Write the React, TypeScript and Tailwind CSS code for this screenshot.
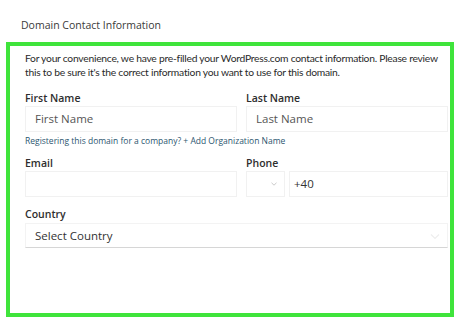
export default function App() {
  return (
    <div className="h-[320px] w-[460px] bg-white font-['Open_Sans',sans-serif] text-[#2e2e2e]">
      <div className="pl-[21px] pt-[17px] text-[10.5px] leading-[16px] text-[#3a3a3a]">
        Domain Contact Information
      </div>
      <div className="mx-[6px] mt-[9px] h-[275px] border-[4px] border-[#3fe43b] px-[15px] pt-[5px]">
        <p className="whitespace-nowrap font-['Lato',sans-serif] text-[10.3px] leading-[14px] tracking-[-0.25px] text-[#2a2a2a]">
          For your convenience, we have pre-filled your WordPress.com contact information. Please review
          <br />
          this to be sure it's the correct information you want to use for this domain.
        </p>
        <div className="mt-[12px] grid grid-cols-[212px_202px] gap-x-[9px]">
          <div>
            <div className="text-[10.5px] font-semibold leading-[14px]">First Name</div>
            <div className="mt-[1px] flex h-[26px] items-center border border-[#f1f1f1] px-[9px] text-[11.5px] text-[#555]">
              First Name
            </div>
          </div>
          <div>
            <div className="text-[10.5px] font-semibold leading-[14px]">Last Name</div>
            <div className="mt-[1px] flex h-[26px] items-center border border-[#f1f1f1] px-[9px] text-[11.5px] text-[#555]">
              Last Name
            </div>
          </div>
        </div>
        <div className="mt-[3px] text-[8.5px] leading-[12px] text-[#2c5670]">
          Registering this domain for a company? + Add Organization Name
        </div>
        <div className="mt-[9px] grid grid-cols-[212px_202px] gap-x-[9px]">
          <div>
            <div className="text-[10.5px] font-semibold leading-[14px]">Email</div>
            <div className="mt-[1px] h-[26px] border border-[#f1f1f1]"></div>
          </div>
          <div>
            <div className="text-[10.5px] font-semibold leading-[14px]">Phone</div>
            <div className="mt-[1px] flex h-[26px]">
              <div className="flex w-[39px] items-center justify-end border border-[#f1f1f1] pr-[7px]">
                <svg width="6" height="4" viewBox="0 0 6 4" fill="none" stroke="#bbb" strokeWidth="0.8">
                  <path d="M0.5 0.8 3 3.2 5.5 0.8" />
                </svg>
              </div>
              <div className="ml-[4px] flex flex-1 items-center border border-[#f1f1f1] px-[4px] text-[11.5px] text-[#333]">
                +40
              </div>
            </div>
          </div>
        </div>
        <div className="mt-[10px]">
          <div className="text-[10.5px] font-semibold leading-[14px]">Country</div>
          <div className="mt-[2px] flex h-[25px] w-[423px] items-center justify-between border border-[#f3f3f3] border-b-[#d6d6d6] pl-[9px] pr-[6px] text-[11.5px] text-[#333]">
            <span>Select Country</span>
            <svg width="12" height="12" viewBox="0 0 12 12" fill="none" stroke="#eee" strokeWidth="1.2">
              <path d="M2 4.5 6 8.5 10 4.5" />
            </svg>
          </div>
        </div>
      </div>
    </div>
  );
}
